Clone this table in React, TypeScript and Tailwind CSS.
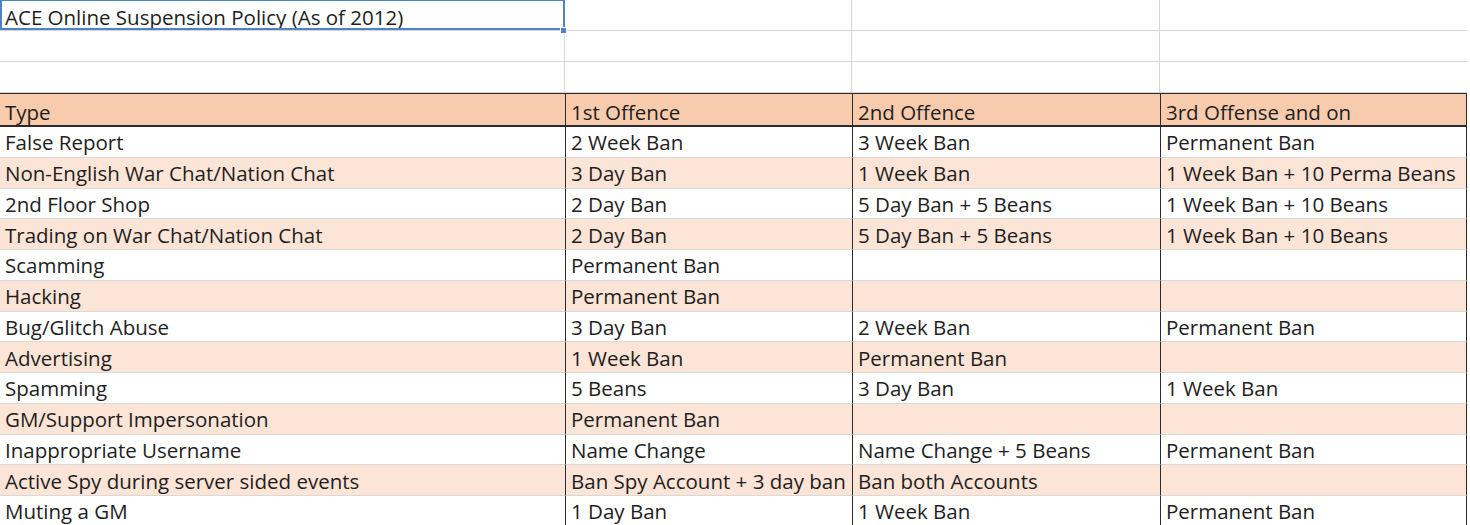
const rows: [string, string, string, string][] = [
  ["False Report", "2 Week Ban", "3 Week Ban", "Permanent Ban"],
  ["Non-English War Chat/Nation Chat", "3 Day Ban", "1 Week Ban", "1 Week Ban + 10 Perma Beans"],
  ["2nd Floor Shop", "2 Day Ban", "5 Day Ban + 5 Beans", "1 Week Ban + 10 Beans"],
  ["Trading on War Chat/Nation Chat", "2 Day Ban", "5 Day Ban + 5 Beans", "1 Week Ban + 10 Beans"],
  ["Scamming", "Permanent Ban", "", ""],
  ["Hacking", "Permanent Ban", "", ""],
  ["Bug/Glitch Abuse", "3 Day Ban", "2 Week Ban", "Permanent Ban"],
  ["Advertising", "1 Week Ban", "Permanent Ban", ""],
  ["Spamming", "5 Beans", "3 Day Ban", "1 Week Ban"],
  ["GM/Support Impersonation", "Permanent Ban", "", ""],
  ["Inappropriate Username", "Name Change", "Name Change + 5 Beans", "Permanent Ban"],
  ["Active Spy during server sided events", "Ban Spy Account + 3 day ban", "Ban both Accounts", ""],
  ["Muting a GM", "1 Day Ban", "1 Week Ban", "Permanent Ban"],
];

const header = ["Type", "1st Offence", "2nd Offence", "3rd Offense and on"];

export default function App() {
  return (
    <div className="w-[1470px] h-[525px] overflow-hidden bg-white text-[20.5px] text-[#1e1e1e] font-['Open_Sans',sans-serif] leading-none">
      <div className="grid grid-cols-[565px_287px_308px_307px]">
        {/* blank sheet rows above the table */}
        <div className="relative h-[31px] border-r border-b border-[#d6d6d6] px-[5px] flex items-end pb-[3px]">
          <span className="whitespace-nowrap">ACE Online Suspension Policy (As of 2012)</span>
          <div className="absolute inset-0 -right-px border-2 border-t border-[#4f81c7]" />
          <div className="absolute -right-[3px] -bottom-[4px] w-[7px] h-[7px] bg-[#4f81c7] border border-white" />
        </div>
        <div className="h-[31px] border-r border-b border-[#d6d6d6]" />
        <div className="h-[31px] border-r border-b border-[#d6d6d6]" />
        <div className="h-[31px] border-b border-[#d6d6d6]" />
        {[0, 1].map((r) => (
          <div key={r} className="contents">
            <div className="h-[31px] border-r border-b border-[#d6d6d6]" />
            <div className="h-[31px] border-r border-b border-[#d6d6d6]" />
            <div className="h-[31px] border-r border-b border-[#d6d6d6]" />
            <div className="h-[31px] border-b border-[#d6d6d6]" />
          </div>
        ))}

        {/* header */}
        {header.map((h, i) => (
          <div
            key={h}
            className={`h-[34px] bg-[#f8cbad] border-t border-b-2 border-[#2b2b2b] px-[5px] flex items-end pb-[3px] whitespace-nowrap ${
              i > 0 ? "border-l" : ""
            } ${i === 3 ? "border-r" : ""}`}
          >
            {h}
          </div>
        ))}

        {/* data */}
        {rows.map((row, r) =>
          row.map((c, i) => (
            <div
              key={`${r}-${i}`}
              className={`h-[30.75px] border-b border-b-[#d9d9d9] px-[5px] flex items-end pb-[4px] whitespace-nowrap ${
                r % 2 === 1 ? "bg-[#fce4d6]" : "bg-white"
              } ${i > 0 ? "border-l border-l-[#2b2b2b]" : ""} ${i === 3 ? "border-r border-r-[#2b2b2b]" : ""}`}
            >
              {c}
            </div>
          ))
        )}
      </div>
    </div>
  );
}
